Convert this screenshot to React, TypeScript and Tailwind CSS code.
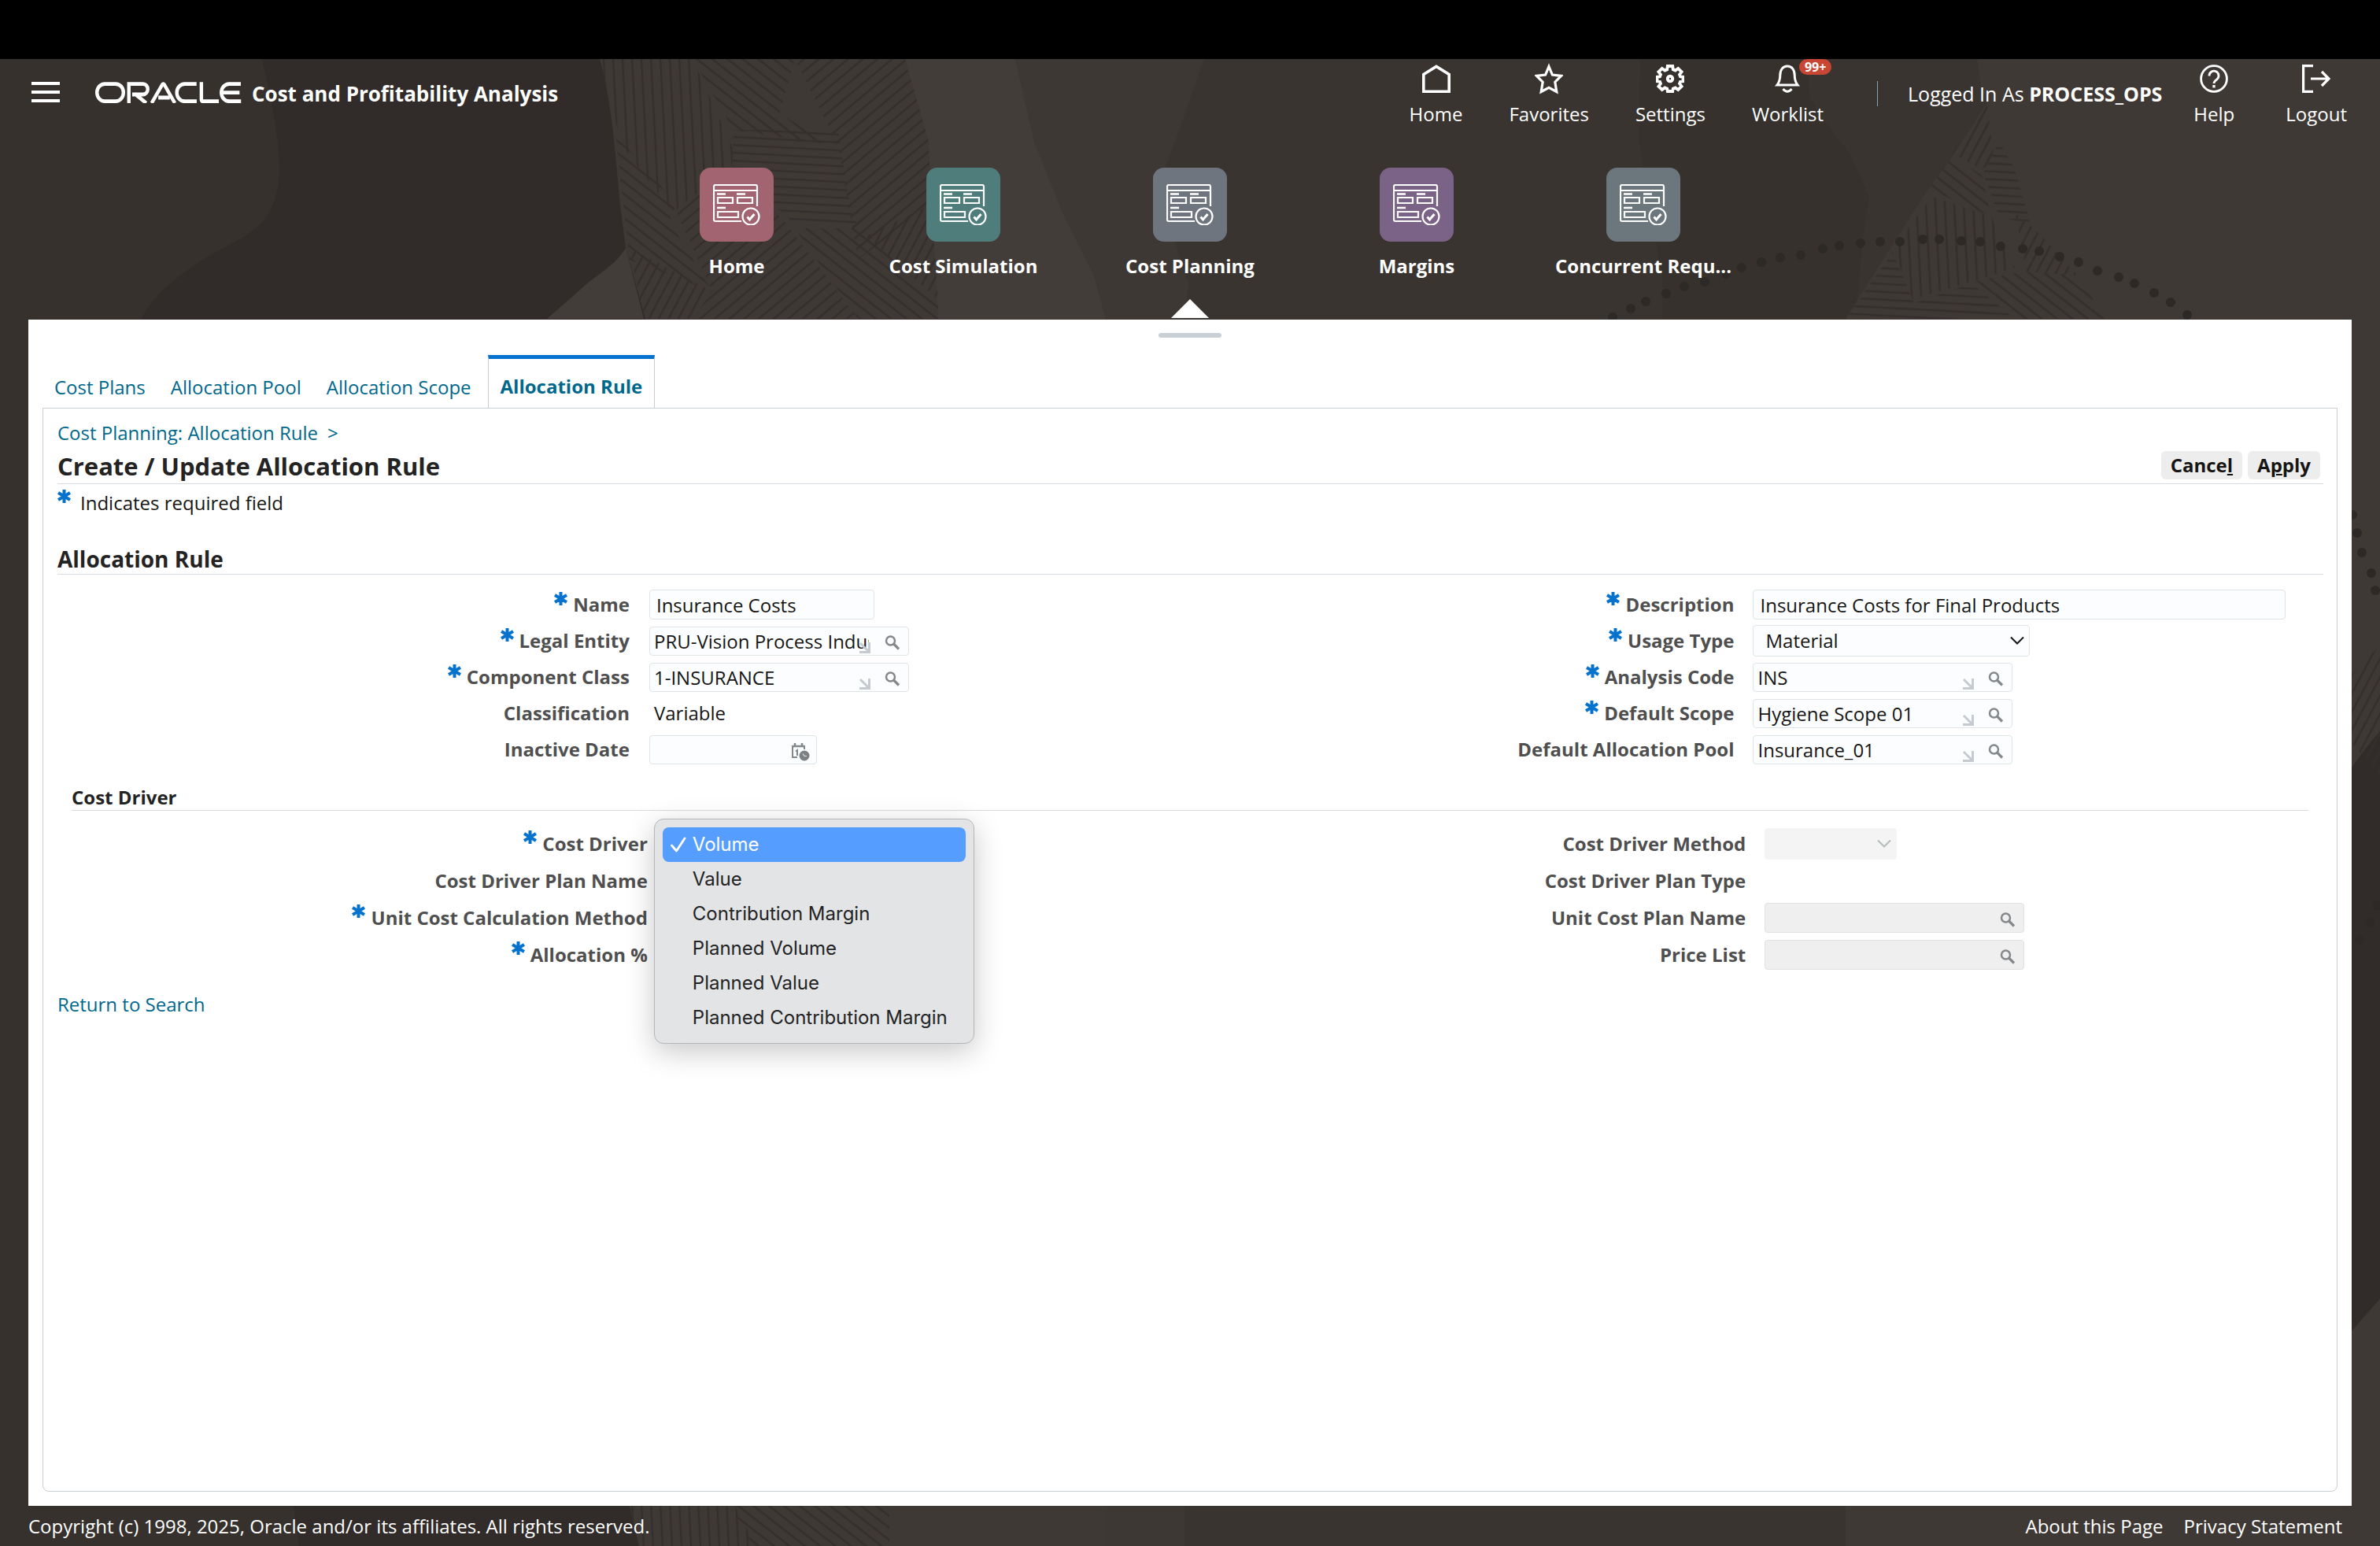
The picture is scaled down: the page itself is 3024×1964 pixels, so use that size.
import type { ReactNode } from "react";

const hatchZones = [
  { fill: "url(#hatch-v)", points: "762,75 880,75 932,190 930,210 855,270 790,185" },
  { fill: "url(#hatch-d1)", points: "880,75 1010,75 990,145 1065,185 932,165" },
  { fill: "url(#hatch-h)", points: "932,165 1065,165 1078,250 1090,290 1010,285 930,210" },
  { fill: "url(#hatch-d2)", points: "1010,75 1150,75 1180,180 1183,260 1090,330 1065,185" },
  { fill: "url(#hatch-d1)", points: "782,170 860,260 850,280 905,370 800,330" },
  { fill: "url(#hatch-d2)", points: "860,270 930,210 1000,285 1090,405 880,405 905,370" },
  { fill: "url(#hatch-d1)", points: "1010,290 1090,290 1192,380 1192,405 1090,405" },
  { fill: "url(#hatch-d3)", points: "800,315 905,370 880,405 818,405" },
  { fill: "url(#hatch-d3)", points: "1183,260 1192,380 1100,300" },
  { fill: "url(#hatch-d3)", points: "2524,128 2534,205 2518,215 2480,195" },
  { fill: "url(#hatch-d1)", points: "2480,200 2518,222 2530,275 2450,240" },
  { fill: "url(#hatch-h)", points: "2540,180 2560,215 2580,285 2540,275 2520,220" },
  { fill: "url(#hatch-v)", points: "2455,250 2530,275 2560,340 2505,358 2430,380 2405,315" },
  { fill: "url(#hatch-h)", points: "2405,320 2432,385 2505,360 2560,405 2345,405" },
  { fill: "url(#hatch-d3)", points: "2560,270 2595,300 2640,350 2575,345" },
  { fill: "url(#hatch-d1)", points: "2505,358 2570,345 2640,350 2675,405 2560,405" },
  { fill: "url(#hatch-d3)", points: "2984,860 3024,820 3024,985 2984,940" },
  { fill: "url(#hatch-v)", points: "798,1905 930,1905 960,1964 812,1964" },
  { fill: "url(#hatch-d1)", points: "925,1905 1130,1905 1130,1964 955,1964" },
];

const dots = [
  [2049, 403], [2072, 392], [2091, 383], [2117, 373], [2140, 364], [2166, 358], [2193, 348], [2213, 340],
  [2238, 333], [2262, 327], [2288, 324], [2316, 316], [2337, 312], [2364, 309], [2389, 307], [2414, 307],
  [2443, 304], [2464, 304], [2492, 306], [2516, 307], [2542, 313], [2570, 316], [2591, 319], [2617, 326],
  [2641, 333], [2665, 344], [2692, 352], [2712, 360], [2737, 372], [2758, 384], [2779, 400], [2989, 654],
  [2995, 677], [3001, 702], [3013, 728], [3018, 750], [3021, 1150], [3011, 1172], [2998, 1194],
];

function Backdrop() {
  return (
    <svg
      aria-hidden="true"
      className="absolute inset-0 h-full w-full"
      viewBox="0 75 3024 1889"
      preserveAspectRatio="xMidYMin slice"
    >
      <defs>
        <pattern id="hatch-v" width="12" height="12" patternUnits="userSpaceOnUse" patternTransform="rotate(-3)">
          <path d="M6 0V12" stroke="#342f2c" strokeWidth="2.600" />
        </pattern>
        <pattern id="hatch-h" width="10" height="10" patternUnits="userSpaceOnUse" patternTransform="rotate(3)">
          <path d="M0 5H10" stroke="#342f2c" strokeWidth="2.600" />
        </pattern>
        <pattern id="hatch-d1" width="12" height="12" patternUnits="userSpaceOnUse" patternTransform="rotate(38)">
          <path d="M0 6H12" stroke="#342f2c" strokeWidth="2.600" />
        </pattern>
        <pattern id="hatch-d2" width="12" height="12" patternUnits="userSpaceOnUse" patternTransform="rotate(-40)">
          <path d="M0 6H12" stroke="#342f2c" strokeWidth="2.600" />
        </pattern>
        <pattern id="hatch-d3" width="11" height="11" patternUnits="userSpaceOnUse" patternTransform="rotate(-62)">
          <path d="M0 5H11" stroke="#342f2c" strokeWidth="2.600" />
        </pattern>
      </defs>
      <path fill="#36312d" d="M0 75H3024V1964H0z" />
      <path fill="#312c29" d="M333 75C345 130 356 180 355 220C350 300 300 300 250 335C215 360 195 375 180 405V1800L372 1905L380 1964H900V75z" />
      <path fill="#3f3936" d="M762 75C778 130 782 200 788 260L795 315L820 405L798 1905L812 1964H1500V75z" />
      <path fill="#433d3a" d="M795 315C780 340 755 350 735 370L695 405H818z" />
      <path fill="#433d3a" d="M1150 75L1180 180L1192 405H1405L1390 350L1350 270L1314 180L1290 75z" />
      <path fill="#3e3834" d="M1290 75L1314 180L1350 270L1390 350L1405 405V1964H1600V75z" />
      <path fill="#3a3431" d="M1530 75L1493 180L1478 220L1490 300L1510 360L1505 405V1964H2600V75z" />
      <path fill="#36312d" d="M2084 75L2083 180L2090 230L2102 300L2112 350V405H2358L2367 300L2375 250L2350 195L2315 150L2300 125L2295 75z" />
      <path fill="#3f3935" d="M2512 75L2517 110L2525 130L2480 200L2450 240L2345 405V1964H3024V75z" />
      <path fill="#312c29" d="M2980 985C3000 960 3012 940 3024 930V1650L2980 1700z" />
      {hatchZones.map((zone) => (
        <polygon key={zone.points} points={zone.points} fill={zone.fill} />
      ))}
      {dots.map(([x, y]) => (
        <circle key={`${x}-${y}`} cx={x} cy={y} r="6" fill="#2d2926" />
      ))}
    </svg>
  );
}

function OracleLogo() {
  return (
    <svg
      role="img"
      aria-label="Oracle"
      className="h-[27px] w-[187px]"
      viewBox="0 0 231 30"
      preserveAspectRatio="none"
      fill="none"
      stroke="white"
      strokeWidth="5.4"
    >
      <rect x="2.7" y="2.9" width="41.6" height="24.4" rx="12.2" />
      <path d="M52.8 30V2.9H75a7.4 7.4 0 0 1 0 14.9H58M62 16.6L80 30" />
      <path d="M88.5 30L105 4.2q1.8-2.4 3.6 0L125 30M99 22.2h18" />
      <path d="M159 2.9h-18.7a12.2 12.2 0 0 0 0 24.5h19" />
      <path d="M166.6.3V25q0 2.4 2.4 2.4h25" />
      <path d="M228.5 2.9h-18.3a12.2 12.2 0 0 0 0 24.5h18.6M199 15.1h27.5" />
    </svg>
  );
}

function FormIcon() {
  return (
    <svg aria-hidden="true" className="h-[52px] w-[60px]" viewBox="0 0 60 52" fill="none" stroke="white" strokeWidth="2.200">
      <path d="M56 28V3q0-2-2-2H3Q1 1 1 3v42q0 2 2 2h33M1 8h55" />
      <path d="M5 12.5h11M30 12.5h11M5 30h11" strokeWidth="2.5" />
      <path d="M6 17h19v7H6zM31 17h19v7H31zM6 35h26v7H6z" />
      <circle cx="48" cy="41" r="10.5" />
      <path d="M43.5 41.5l3 3.5 6-7" strokeWidth="3" />
    </svg>
  );
}

function HomeIcon() {
  return (
    <svg aria-hidden="true" className="h-9 w-9" viewBox="0 0 36 36" fill="none" stroke="white" strokeWidth="3.6">
      <path d="M1.8 12.5L18 2.4l16.2 10.1v21.7H1.8z" />
    </svg>
  );
}

function StarIcon() {
  return (
    <svg aria-hidden="true" className="h-10 w-9 -my-0.5" viewBox="0 0 36 40" fill="none" stroke="white" strokeWidth="3.2">
      <path d="M18 4.5L22.4 15l11.2 1.3-7.8 7.9 2 12.3L18 31.3l-9.8 5.2 2-12.3-7.8-7.9L13.6 15z" />
    </svg>
  );
}

function GearIcon() {
  return (
    <svg aria-hidden="true" className="h-9 w-9" viewBox="0 0 36 36" fill="none" stroke="white" strokeWidth="3.800">
      <path d="M14.8 2h6.4l.6 4.3 2.900 1.2 3.5-2.6 4.4 4.4-2.6 3.5 1 2.5 3.5.5v5.4l-3.5.5-1 2.5 2.6 3.5-4.4 4.4-3.5-2.6-2.900 1.2-.6 3.3h-6.4l-.6-3.3-2.900-1.2-3.5 2.6-4.4-4.4 2.6-3.5-1-2.5-3.5-.5v-5.4l3.5-.5 1-2.5-2.6-3.5 4.4-4.4 3.5 2.6 2.900-1.2z" />
      <circle cx="18" cy="18" r="3.2" strokeWidth="4" />
    </svg>
  );
}

function BellIcon() {
  return (
    <svg aria-hidden="true" className="h-9 w-9" viewBox="0 0 36 36" fill="none" stroke="white" strokeWidth="3">
      <path d="M5 26q3.8-5 3.8-12.5C8.8 6.5 12.5 2 18 2s9.2 4.5 9.2 11.5Q27.2 21 31 26z" />
      <path d="M12.5 31q5.5 6.5 11 0" />
    </svg>
  );
}

function HelpIcon() {
  return (
    <svg aria-hidden="true" className="h-9 w-9" viewBox="0 0 36 36" fill="none" stroke="white" strokeWidth="2.8">
      <circle cx="18" cy="18" r="16.4" />
      <path d="M12 14.5a6 6 0 1 1 9.5 4.6c-2.3 1.6-3.5 2.4-3.5 5" />
      <path d="M18 26v3.4" strokeWidth="3.4" />
    </svg>
  );
}

function LogoutIcon() {
  return (
    <svg aria-hidden="true" className="h-9 w-9" viewBox="0 0 36 36" fill="none" stroke="white" strokeWidth="3.2">
      <path d="M14 1.6H1.6v32.8H14M11 18h23M25 9l9 9-9 9" />
    </svg>
  );
}

function SearchIcon() {
  return (
    <svg aria-hidden="true" className="h-5 w-5" viewBox="0 0 20 20" fill="none" stroke="#85888b" strokeWidth="2.5">
      <circle cx="7.5" cy="8" r="5.5" />
      <path d="M11.5 12l6.5 6.5" strokeWidth="3.2" />
    </svg>
  );
}

function CalendarIcon() {
  return (
    <svg aria-hidden="true" className="h-6 w-6" viewBox="0 0 24 24" fill="none" stroke="#85888b" strokeWidth="2">
      <path d="M8 19H2V5h15v4" />
      <path d="M2 5h15M5 1v5M14 1v5" strokeWidth="2.5" />
      <path d="M6 11.5L8 10v7" />
      <circle cx="17" cy="17" r="6.500" fill="#7d8083" stroke="none" />
      <path d="M15 14.5l2 3h3" stroke="#dfe1e3" strokeWidth="1.2" />
    </svg>
  );
}

function Chevron({ color }: { color: string }) {
  return (
    <svg
      aria-hidden="true"
      className="pointer-events-none absolute top-1/2 right-1.5 h-3 w-5 -translate-y-1/2"
      viewBox="0 0 20 12"
      fill="none"
      stroke={color}
      strokeWidth="2"
    >
      <path d="M2 1.5l8 8 8-8" />
    </svg>
  );
}

function Asterisk() {
  return (
    <svg aria-hidden="true" className="h-[17px] w-[17px]" viewBox="0 0 17 17" stroke="#0572ce" strokeWidth="4">
      <path d="M8.500 0v17M1 4l15 9M16 4L1 13" />
    </svg>
  );
}

type RowProps = {
  label: string;
  id?: string;
  required?: boolean;
  className: string;
  children?: ReactNode;
};

function Row({ label, id, required, className, children }: RowProps) {
  const text = (
    <>
      {required && <span className="pb-4"><Asterisk /></span>}
      {label}
    </>
  );
  const labelClass = "flex items-center justify-end gap-[7px] font-bold text-[#4f4f4f]";

  return (
    <div className={`grid items-center ${className}`}>
      {id ? <label htmlFor={id} className={labelClass}>{text}</label> : <span className={labelClass}>{text}</span>}
      <div className="relative flex items-center">{children}</div>
    </div>
  );
}

const ruleLeft = "h-[46px] gap-[25px] grid-cols-[50.5%_1fr]";
const ruleRight = "h-[46px] gap-6 grid-cols-[48%_1fr]";
const driverLeft = "h-[47px] gap-2 grid-cols-[51.5%_1fr]";
const driverRight = "h-[47px] gap-6 grid-cols-[49.7%_1fr]";

const boxClass = "rounded-[4px] border border-[#dfe4e7] bg-[#fbfdff] text-[#161513]";

function Lookup({ id, label, value }: { id: string; label: string; value: string }) {
  return (
    <div className={`relative flex h-[37px] w-[330px] items-center ${boxClass}`}>
      <input id={id} defaultValue={value} className="h-full min-w-0 flex-1 pl-[5px] outline-none" />
      <svg
        aria-hidden="true"
        className="pointer-events-none absolute right-12 bottom-0.5 h-3.5 w-3.5"
        viewBox="0 0 14 14"
        fill="none"
        stroke="#c5cbd0"
        strokeWidth="3"
      >
        <path d="M1 1l10 10M12.5 0v12.500H0" />
      </svg>
      <button type="button" aria-label={`Search ${label}`} className="flex w-[50px] justify-end pt-1 pr-2.5">
        <SearchIcon />
      </button>
    </div>
  );
}

function DisabledLookup({ id, label }: { id: string; label: string }) {
  return (
    <div className="flex h-[38px] w-[330px] items-center rounded-[4px] border border-[#dfe1e3] bg-[#efefef]">
      <input id={id} disabled className="h-full min-w-0 flex-1" />
      <button type="button" disabled aria-label={`Search ${label}`} className="flex w-[50px] justify-end pt-1 pr-2.5">
        <SearchIcon />
      </button>
    </div>
  );
}

const driverOptions = [
  "Volume",
  "Value",
  "Contribution Margin",
  "Planned Volume",
  "Planned Value",
  "Planned Contribution Margin",
];

function DriverMenu() {
  return (
    <ul
      role="listbox"
      aria-label="Cost Driver"
      className="absolute -top-3 left-0 z-10 w-[407px] rounded-xl border border-[#b4b6b8] bg-[#e2e4e6] p-2.5 font-['Inter',sans-serif] text-[#232323] shadow-[0_10px_36px_rgba(0,0,0,0.22)]"
    >
      {driverOptions.map((option, i) => (
        <li
          key={option}
          role="option"
          aria-selected={i === 0}
          className={
            i === 0
              ? "flex h-11 items-center rounded-lg bg-[#559eff] pl-2.5 text-white"
              : "flex h-11 items-center pl-2.5"
          }
        >
          <span className="w-7">
            {i === 0 && (
              <svg aria-hidden="true" className="h-5 w-5" viewBox="0 0 20 20" fill="none" stroke="white" strokeWidth="2.8">
                <path d="M1.5 11l6 7L18 2" strokeLinecap="round" strokeLinejoin="round" />
              </svg>
            )}
          </span>
          {option}
        </li>
      ))}
    </ul>
  );
}

function HeaderLink({ label, children }: { label: string; children: ReactNode }) {
  return (
    <a href="#" className="flex flex-col items-center gap-[11px] pt-[7px]">
      {children}
      <span>{label}</span>
    </a>
  );
}

const navItems = [
  { label: "Home", tile: "bg-[#a26470]" },
  { label: "Cost Simulation", tile: "bg-[#4f7d7b]" },
  { label: "Cost Planning", tile: "bg-[#6f757e]", active: true },
  { label: "Margins", tile: "bg-[#7b6287]" },
  { label: "Concurrent Requ...", tile: "bg-[#6b777c]" },
];

export default function App() {
  return (
    <div className="flex min-h-screen flex-col bg-black font-['Open_Sans',sans-serif] text-[24px] leading-8">
      <div className="relative isolate mt-[75px] flex flex-1 flex-col overflow-hidden">
        <div className="absolute inset-0 -z-10"><Backdrop /></div>

        <header className="text-white">
          <div className="flex items-start justify-between pr-[42px] pl-10">
            <div className="flex items-center pt-6">
              <button type="button" aria-label="Navigator" className="flex flex-col gap-[7px]">
                <span className="h-1 w-9 bg-white" />
                <span className="h-1 w-9 bg-white" />
                <span className="h-1 w-9 bg-white" />
              </button>
              <div className="ml-[45px] flex items-center gap-3">
                <OracleLogo />
                <h1 className="pt-1 text-[26px] leading-8 font-bold">Cost and Profitability Analysis</h1>
              </div>
            </div>

            <div className="flex items-start">
              <nav className="flex gap-[59px]">
                <HeaderLink label="Home"><HomeIcon /></HeaderLink>
                <HeaderLink label="Favorites"><StarIcon /></HeaderLink>
                <HeaderLink label="Settings"><GearIcon /></HeaderLink>
                <a href="#" className="relative flex flex-col items-center gap-[11px] pt-[7px]">
                  <BellIcon />
                  <span>Worklist</span>
                  <span className="absolute top-0 left-[60px] rounded-full bg-[#c74634] px-[7px] text-[16px] leading-5 font-bold">99+</span>
                </a>
              </nav>
              <div className="mt-7 ml-[68px] h-8 w-px bg-[#7fa6bd]" />
              <p className="mt-7 ml-[38px] text-[25px] leading-8">
                Logged In As <strong className="font-bold">PROCESS_OPS</strong>
              </p>
              <div className="ml-10 flex gap-[65px]">
                <HeaderLink label="Help"><HelpIcon /></HeaderLink>
                <HeaderLink label="Logout"><LogoutIcon /></HeaderLink>
              </div>
            </div>
          </div>

          <nav className="mt-[52px] flex h-[193px] justify-center">
            {navItems.map((item) => (
              <a key={item.label} href="#" className="flex w-72 flex-col items-center">
                <span className={`flex h-[94px] w-[94px] items-center justify-center rounded-[14px] ${item.tile}`}>
                  <FormIcon />
                </span>
                <span className="mt-[15px] font-bold">{item.label}</span>
                {item.active && (
                  <svg aria-hidden="true" className="mt-[26px] h-6 w-12" viewBox="0 0 48 24" fill="white">
                    <path d="M24 0l24 24H0z" />
                  </svg>
                )}
              </a>
            ))}
          </nav>
        </header>

        <main className="mx-9 flex flex-1 flex-col bg-white px-[18px] pb-[18px]">
          <div className="mx-auto mt-[17px] h-1.5 w-20 rounded-full bg-[#c9d0d5]" />

          <nav className="-mb-px mt-[22px] flex items-end text-[#00688c]">
            <div className="flex gap-8 pr-[21px] pb-[11px] pl-[15px]">
              <a href="#">Cost Plans</a>
              <a href="#">Allocation Pool</a>
              <a href="#">Allocation Scope</a>
            </div>
            <a
              href="#"
              aria-current="page"
              className="border-x border-t-[5px] border-x-[#c7ced3] border-t-[#0572ce] bg-white px-[15px] pt-[19px] pb-3 font-bold"
            >
              Allocation Rule
            </a>
          </nav>

          <div className="flex-1 rounded-b-lg border border-[#c7ced3] pr-[17px] pl-[18px]">
            <p className="mt-[15px] text-[#00688c]">
              <a href="#">Cost Planning: Allocation Rule</a>
              <span className="ml-3">&gt;</span>
            </p>

            <div className="mt-[7px] flex h-[42px] items-start justify-between border-b border-[#d5dbdf]">
              <h2 className="text-[31px] leading-[38px] font-bold text-[#232323]">Create / Update Allocation Rule</h2>
              <div className="mr-1 flex gap-[7px] font-bold text-[#161513]">
                <button type="button" className="h-9 rounded-[6px] bg-[#ededed] px-3">
                  Cance<span className="underline">l</span>
                </button>
                <button type="button" className="h-9 rounded-[6px] bg-[#ededed] px-3">
                  A<span className="underline">p</span>ply
                </button>
              </div>
            </div>

            <p className="mt-[7px] flex items-center gap-3 text-[#161513]">
              <span className="pb-4"><Asterisk /></span>
              Indicates required field
            </p>

            <h3 className="mt-[39px] border-b border-[#d5dbdf] pb-[3px] text-[28px] leading-8 font-bold text-[#232323]">
              Allocation Rule
            </h3>
            <div className="mt-[15px] grid grid-cols-2">
              <div>
                <Row label="Name" id="name" required className={ruleLeft}>
                  <input id="name" defaultValue="Insurance Costs" className={`h-[38px] w-[286px] px-2 ${boxClass}`} />
                </Row>
                <Row label="Legal Entity" id="entity" required className={ruleLeft}>
                  <Lookup id="entity" label="Legal Entity" value="PRU-Vision Process Industries" />
                </Row>
                <Row label="Component Class" id="component" required className={ruleLeft}>
                  <Lookup id="component" label="Component Class" value="1-INSURANCE" />
                </Row>
                <Row label="Classification" className={ruleLeft}>
                  <span className="pl-1.5 text-[#161513]">Variable</span>
                </Row>
                <Row label="Inactive Date" id="inactive" className={ruleLeft}>
                  <div className={`flex h-[37px] w-[213px] items-center ${boxClass}`}>
                    <input id="inactive" className="h-full min-w-0 flex-1 pl-[5px] outline-none" />
                    <button type="button" aria-label="Pick a date" className="pt-1.5 pr-2">
                      <CalendarIcon />
                    </button>
                  </div>
                </Row>
              </div>

              <div>
                <Row label="Description" id="description" required className={ruleRight}>
                  <input
                    id="description"
                    defaultValue="Insurance Costs for Final Products"
                    className={`h-[38px] w-[677px] px-2 ${boxClass}`}
                  />
                </Row>
                <Row label="Usage Type" id="usage" required className={ruleRight}>
                  <div className="relative">
                    <select id="usage" className={`h-10 w-[352px] appearance-none pl-[15px] ${boxClass}`}>
                      <option>Material</option>
                    </select>
                    <Chevron color="#161513" />
                  </div>
                </Row>
                <Row label="Analysis Code" id="code" required className={ruleRight}>
                  <Lookup id="code" label="Analysis Code" value="INS" />
                </Row>
                <Row label="Default Scope" id="scope" required className={ruleRight}>
                  <Lookup id="scope" label="Default Scope" value="Hygiene Scope 01" />
                </Row>
                <Row label="Default Allocation Pool" id="pool" className={ruleRight}>
                  <Lookup id="pool" label="Default Allocation Pool" value="Insurance_01" />
                </Row>
              </div>
            </div>

            <div className="mr-[19px] ml-[18px]">
              <h4 className="mt-[22px] border-b border-[#d5dbdf] font-bold text-[#232323]">Cost Driver</h4>
              <div className="mt-[18px] grid grid-cols-2">
                <div>
                  <Row label="Cost Driver" id="driver" required className={driverLeft}>
                    <select id="driver" className={`ml-4 h-10 w-[352px] appearance-none pl-[15px] ${boxClass}`}>
                      {driverOptions.map((option) => (
                        <option key={option}>{option}</option>
                      ))}
                    </select>
                    <DriverMenu />
                  </Row>
                  <Row label="Cost Driver Plan Name" className={driverLeft} />
                  <Row label="Unit Cost Calculation Method" id="method" required className={driverLeft}>
                    <select id="method" className={`ml-4 h-10 w-[352px] appearance-none ${boxClass}`} />
                  </Row>
                  <Row label="Allocation %" id="percent" required className={driverLeft}>
                    <input id="percent" className={`ml-4 h-[38px] w-[286px] px-2 ${boxClass}`} />
                  </Row>
                </div>
                <div>
                  <Row label="Cost Driver Method" id="driver-method" className={driverRight}>
                    <div className="relative">
                      <select id="driver-method" disabled className="h-10 w-[168px] appearance-none rounded-[4px] bg-[#f4f4f4]" />
                      <Chevron color="#b5babd" />
                    </div>
                  </Row>
                  <Row label="Cost Driver Plan Type" className={driverRight} />
                  <Row label="Unit Cost Plan Name" id="unit-plan" className={driverRight}>
                    <DisabledLookup id="unit-plan" label="Unit Cost Plan Name" />
                  </Row>
                  <Row label="Price List" id="price-list" className={driverRight}>
                    <DisabledLookup id="price-list" label="Price List" />
                  </Row>
                </div>
              </div>
            </div>

            <a href="#" className="mt-6 inline-block text-[#00688c]">Return to Search</a>
          </div>
        </main>

        <footer className="flex h-[51px] items-center justify-between pr-12 pl-9 text-white">
          <p>Copyright (c) 1998, 2025, Oracle and/or its affiliates. All rights reserved.</p>
          <div className="flex gap-[26px]">
            <a href="#">About this Page</a>
            <a href="#">Privacy Statement</a>
          </div>
        </footer>
      </div>
    </div>
  );
}
